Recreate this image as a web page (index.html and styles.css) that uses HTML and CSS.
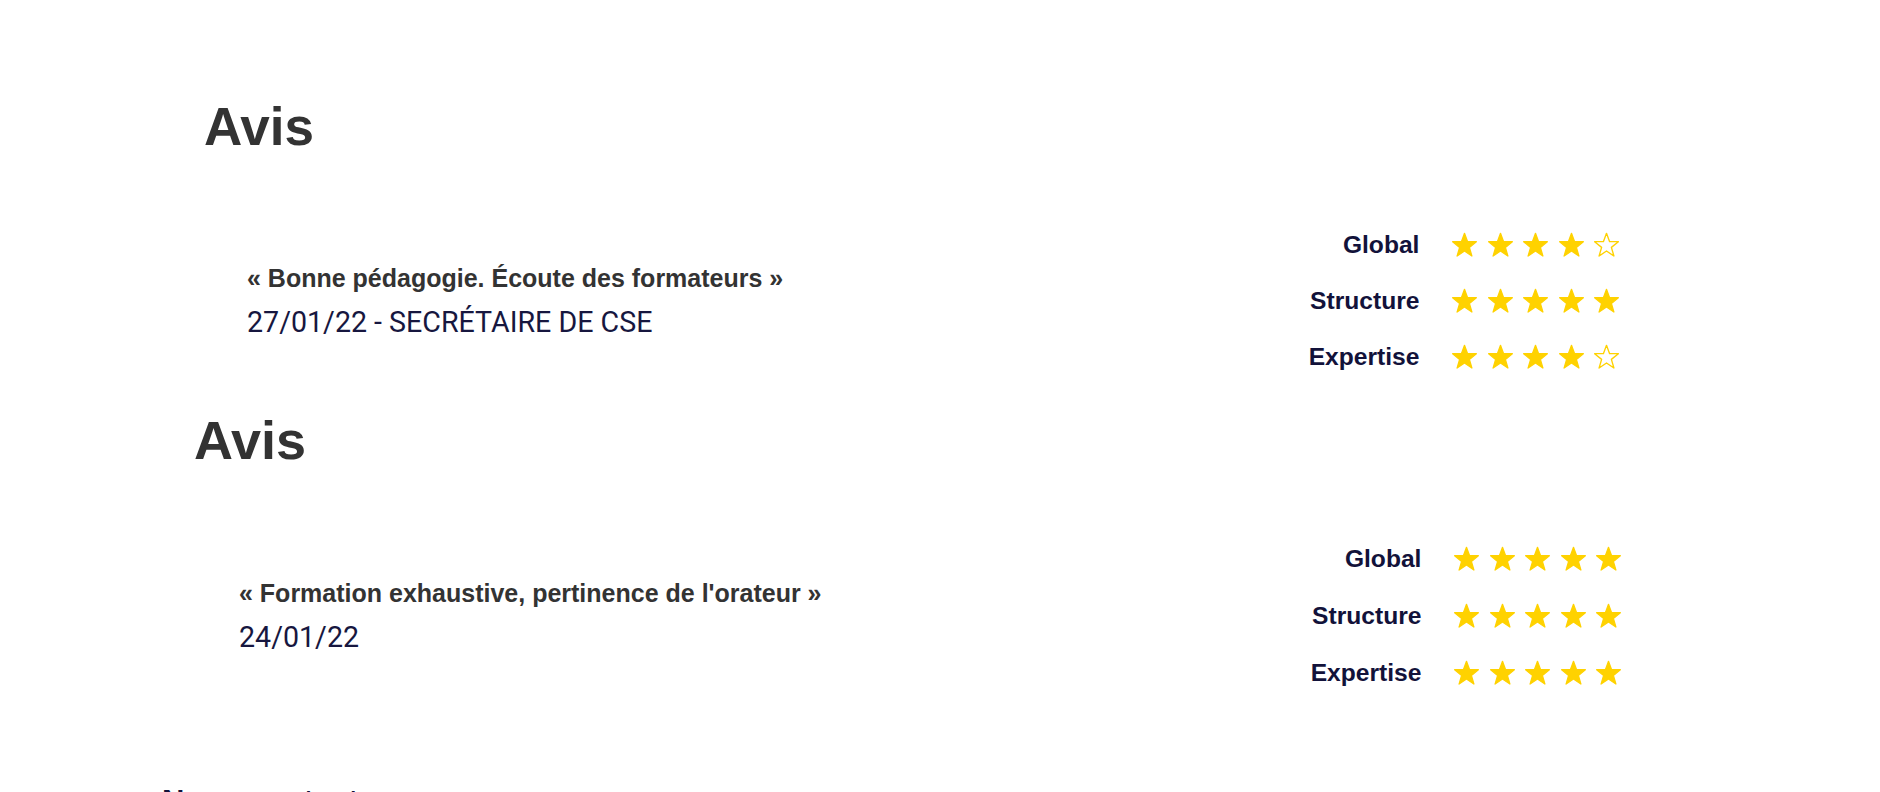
FILE: index.html
```html
<!DOCTYPE html>
<html lang="fr">
  <head>
    <meta charset="UTF-8" />
    <meta name="viewport" content="width=device-width, initial-scale=1.0" />
    <title>Avis</title>
    <link rel="stylesheet" href="styles.css">
  </head>
  <body>
    <svg width="0" height="0" style="position: absolute">
      <symbol id="star" viewBox="0 0 24 24">
        <path d="M12 0.8L15 8.8H23.4L16.7 14.3L19.1 22.6L12 17.8L4.9 22.6L7.3 14.3L0.6 8.8H9Z" />
      </symbol>
    </svg>

    <section class="avis">
      <h2 class="avis-title">Avis</h2>
      <div class="review">
        <div class="review-text">
          <p class="quote">« Bonne pédagogie. Écoute des formateurs »</p>
          <p class="meta">27/01/22 - SECRÉTAIRE DE CSE</p>
        </div>
        <div class="ratings">
          <span class="label">Global</span>
          <span class="stars">
            <svg class="star"><use href="#star" /></svg>
            <svg class="star"><use href="#star" /></svg>
            <svg class="star"><use href="#star" /></svg>
            <svg class="star"><use href="#star" /></svg>
            <svg class="star empty"><use href="#star" /></svg>
          </span>
          <span class="label">Structure</span>
          <span class="stars">
            <svg class="star"><use href="#star" /></svg>
            <svg class="star"><use href="#star" /></svg>
            <svg class="star"><use href="#star" /></svg>
            <svg class="star"><use href="#star" /></svg>
            <svg class="star"><use href="#star" /></svg>
          </span>
          <span class="label">Expertise</span>
          <span class="stars">
            <svg class="star"><use href="#star" /></svg>
            <svg class="star"><use href="#star" /></svg>
            <svg class="star"><use href="#star" /></svg>
            <svg class="star"><use href="#star" /></svg>
            <svg class="star empty"><use href="#star" /></svg>
          </span>
        </div>
      </div>
    </section>

    <section class="avis avis-second">
      <h2 class="avis-title">Avis</h2>
      <div class="review">
        <div class="review-text">
          <p class="quote">« Formation exhaustive, pertinence de l'orateur »</p>
          <p class="meta">24/01/22</p>
        </div>
        <div class="ratings">
          <span class="label">Global</span>
          <span class="stars">
            <svg class="star"><use href="#star" /></svg>
            <svg class="star"><use href="#star" /></svg>
            <svg class="star"><use href="#star" /></svg>
            <svg class="star"><use href="#star" /></svg>
            <svg class="star"><use href="#star" /></svg>
          </span>
          <span class="label">Structure</span>
          <span class="stars">
            <svg class="star"><use href="#star" /></svg>
            <svg class="star"><use href="#star" /></svg>
            <svg class="star"><use href="#star" /></svg>
            <svg class="star"><use href="#star" /></svg>
            <svg class="star"><use href="#star" /></svg>
          </span>
          <span class="label">Expertise</span>
          <span class="stars">
            <svg class="star"><use href="#star" /></svg>
            <svg class="star"><use href="#star" /></svg>
            <svg class="star"><use href="#star" /></svg>
            <svg class="star"><use href="#star" /></svg>
            <svg class="star"><use href="#star" /></svg>
          </span>
        </div>
      </div>
    </section>

    <h3 class="contact">Nous contacter</h3>
  </body>
</html>
```

FILE: styles.css
```css
body {
  margin: 0;
  padding-top: 96px;
  background-color: #ffffff;
  font-family: "Liberation Sans", Arial, sans-serif;
  overflow: hidden;
}
.avis {
  padding-left: 204px;
  padding-right: 261px;
}
.avis-title {
  margin: 0;
  font-size: 53px;
  line-height: 62px;
  font-weight: bold;
  color: #333333;
}
.review {
  display: flex;
  align-items: center;
  margin-top: 73px;
  padding-left: 43px;
}
.review-text {
  flex: 1;
}
.quote {
  margin: 0;
  font-size: 25px;
  line-height: 32px;
  font-weight: bold;
  color: #333333;
}
.meta {
  margin: 10px 0 0 0;
  font-family: Roboto, "Liberation Sans", sans-serif;
  font-size: 28.6px;
  line-height: 36px;
  color: #17173f;
}
.ratings {
  display: grid;
  grid-template-columns: auto auto;
  column-gap: 33px;
  row-gap: 28px;
  align-items: center;
}
.label {
  text-align: right;
  font-size: 24.6px;
  line-height: 28px;
  font-weight: bold;
  color: #12123a;
}
.stars {
  display: flex;
  align-items: center;
  gap: 10.4px;
}
.star {
  width: 25px;
  height: 26px;
  overflow: visible;
  fill: #ffd200;
  stroke: #ffd200;
  stroke-width: 1.2px;
  stroke-linejoin: round;
}
.star.empty {
  fill: none;
  stroke-width: 1.3px;
}
.avis-second {
  margin-top: 38px;
  padding-left: 194px;
  padding-right: 259px;
}
.avis-second .avis-title {
  font-size: 54px;
}
.avis-second .review {
  margin-top: 74px;
  padding-left: 45px;
}
.avis-second .ratings {
  row-gap: 29px;
}
.contact {
  margin: 96px 0 0 162px;
  font-size: 31px;
  line-height: 37px;
  font-weight: bold;
  color: #12123a;
}
```
